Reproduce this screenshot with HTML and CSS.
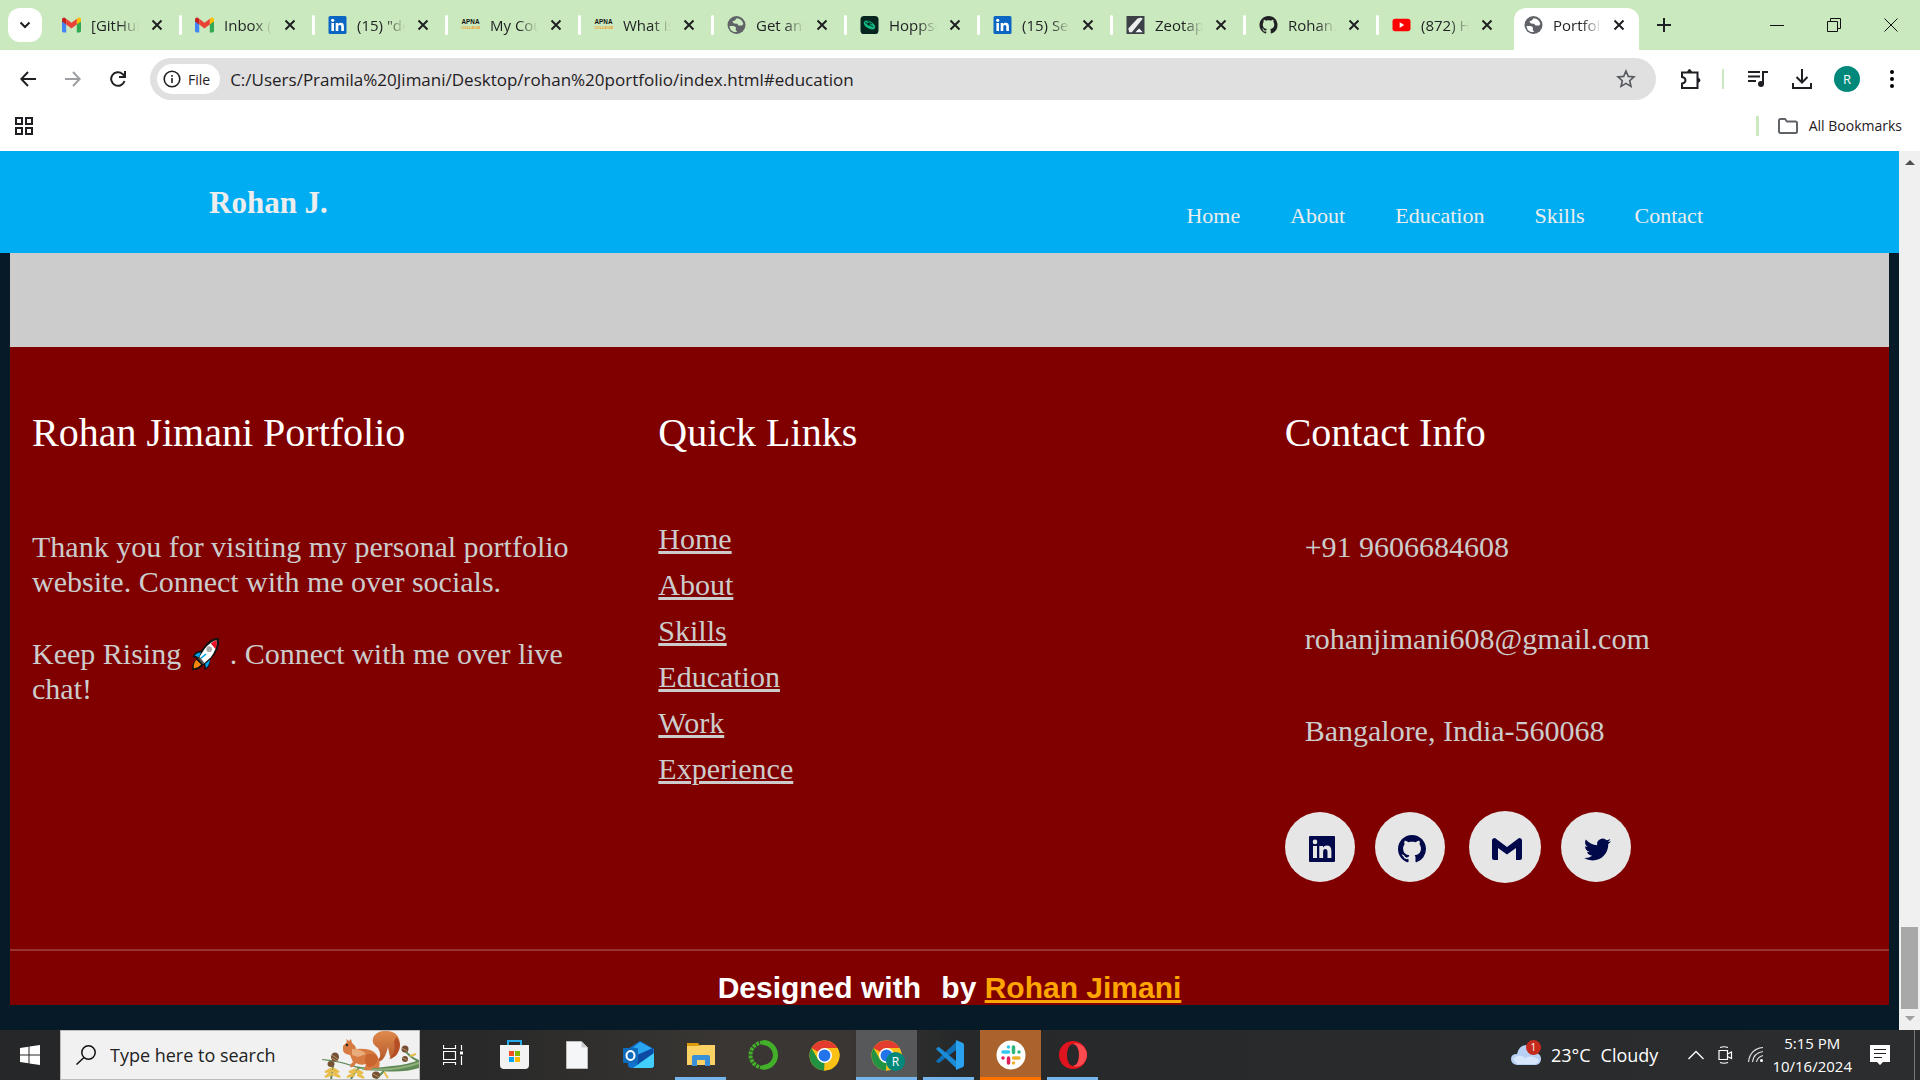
FILE: index.html
```html
<!DOCTYPE html>
<html lang="en">
<head>
<meta charset="utf-8">
<title>Portfolio</title>
<link rel="stylesheet" href="styles.css">
</head>
<body>
<svg class="defs" aria-hidden="true">
  <symbol id="close" viewBox="0 0 12 12"><path d="M1.500 1.500l9 9M10.500 1.500l-9 9" fill="none" stroke="#1f2023" stroke-width="2"/></symbol>
  <symbol id="gmail" viewBox="0 0 18 14"><path d="M0 2v10.500C0 13.400.6 14 1.400 14H4V5z" fill="#4285f4"/><path d="M18 2v10.500c0 .9-.6 1.500-1.400 1.500H14V5z" fill="#34a853"/><path d="M14 1.200V6.600l4-3V2c0-2-2.100-2.600-3.400-1.500z" fill="#fbbc04"/><path d="M4 1.200V6.600l-4-3V2C0 0 2.100-.6 3.400.5z" fill="#c5221f"/><path d="M4 1l5 3.800L14 1v5.600l-5 3.800-5-3.800z" fill="#ea4335"/></symbol>
  <symbol id="linkedin" viewBox="0 0 18 18"><rect width="18" height="18" rx="1.500" fill="#0a66c2"/><circle cx="4.200" cy="4.300" r="1.600" fill="#fff"/><path d="M2.900 7h2.600v8H2.900zM7.200 7h2.500v1.200c.5-.9 1.500-1.400 2.600-1.400 2.400 0 3.100 1.500 3.100 3.900V15h-2.600v-3.900c0-1.100-.2-2.100-1.400-2.100s-1.600.9-1.600 2.100V15H7.200z" fill="#fff"/></symbol>
  <symbol id="apna" viewBox="0 0 18 12"><text x="9" y="5" text-anchor="middle" class="apna-top">APNA</text><text x="9" y="10" text-anchor="middle" class="apna-bottom">COLLEGE</text></symbol>
  <symbol id="globe" viewBox="0 0 18 18"><circle cx="9" cy="9" r="9" fill="#5f6368"/><path d="M2 10h4.500l2 1.500-.3 2.500 1.500 2C5 16.500 2.300 14 2 10zM9 2.200L7.400 4.500l-2.600.8 1.600 2.200 3.200.2 1.400 1.800 3.600.1 1.200-1.600C15.500 5 12.500 2.300 9 2.200z" fill="var(--tab-fill)"/></symbol>
  <symbol id="github" viewBox="0 0 16 16"><path d="M8 0C3.580 0 0 3.580 0 8c0 3.540 2.290 6.530 5.470 7.590.4.070.55-.17.55-.38 0-.19-.01-.82-.01-1.490-2.010.37-2.530-.49-2.690-.94-.09-.23-.48-.94-.82-1.130-.28-.15-.68-.52-.01-.53.63-.01 1.080.58 1.230.82.72 1.210 1.870.87 2.330.66.070-.52.28-.87.51-1.070-1.780-.2-3.640-.89-3.640-3.950 0-.87.31-1.590.82-2.150-.08-.2-.36-1.020.08-2.120 0 0 .67-.21 2.200.82.64-.18 1.320-.27 2-.27s1.360.09 2 .27c1.530-1.040 2.200-.82 2.200-.82.44 1.100.16 1.920.08 2.120.51.56.82 1.270.82 2.150 0 3.070-1.870 3.750-3.650 3.950.29.25.54.73.54 1.480 0 1.070-.01 1.930-.01 2.200 0 .21.15.46.55.38A8.010 8.010 0 0016 8c0-4.420-3.580-8-8-8z" fill="currentColor"/></symbol>
  <symbol id="chrome" viewBox="0 0 32 32"><circle cx="16" cy="16" r="15.500" fill="#fbc116"/><path d="M16 16L2.600 8.300A15.500 15.500 0 0 1 29.400 8.300H16z" fill="#e33b2e"/><path d="M2.600 8.300L9.300 20 16 23.700 15.500 31.500A15.500 15.500 0 0 1 2.600 8.300z" fill="#229342"/><path d="M16 8.300h13.400A15.500 15.500 0 0 1 15.500 31.500L22.700 19.500z" fill="#fbc116"/><circle cx="16" cy="16" r="7.700" fill="#fff"/><circle cx="16" cy="16" r="6.100" fill="#2374ea"/></symbol>
</svg>

<header class="browser">
  <div class="tabstrip">
    <button class="tab-search" aria-label="Search tabs"><svg width="12" height="8" viewBox="0 0 12 8"><path d="M1.500 1.500L6 6l4.500-4.500" fill="none" stroke="#1f2023" stroke-width="2"/></svg></button>
    <div class="tabs">
      <div class="tab"><svg class="fav"><use href="#gmail"/></svg><span>[GitHub]</span><button aria-label="Close tab"><svg><use href="#close"/></svg></button></div>
      <div class="tab"><svg class="fav"><use href="#gmail"/></svg><span>Inbox (3)</span><button aria-label="Close tab"><svg><use href="#close"/></svg></button></div>
      <div class="tab"><svg class="fav"><use href="#linkedin"/></svg><span>(15) "dev</span><button aria-label="Close tab"><svg><use href="#close"/></svg></button></div>
      <div class="tab"><svg class="fav"><use href="#apna"/></svg><span>My Course</span><button aria-label="Close tab"><svg><use href="#close"/></svg></button></div>
      <div class="tab"><svg class="fav"><use href="#apna"/></svg><span>What is</span><button aria-label="Close tab"><svg><use href="#close"/></svg></button></div>
      <div class="tab"><svg class="fav"><use href="#globe"/></svg><span>Get any</span><button aria-label="Close tab"><svg><use href="#close"/></svg></button></div>
      <div class="tab"><svg class="fav" viewBox="0 0 20 20"><rect width="20" height="20" rx="4" fill="#06251f"/><ellipse cx="10" cy="10" rx="7" ry="4" transform="rotate(30 10 10)" fill="#10b981"/><path d="M5 7l9 5M7 5l6 4" stroke="#06251f" fill="none"/><circle cx="9" cy="9" r="1.500" fill="#06251f"/></svg><span>Hoppscotch</span><button aria-label="Close tab"><svg><use href="#close"/></svg></button></div>
      <div class="tab"><svg class="fav"><use href="#linkedin"/></svg><span>(15) Search</span><button aria-label="Close tab"><svg><use href="#close"/></svg></button></div>
      <div class="tab"><svg class="fav" viewBox="0 0 20 20"><rect width="20" height="20" fill="#3b4147"/><path d="M2 14L12 3q4-2 6 0L6 18H3z" fill="#eee"/><path d="M10 18l4-4 4 4z" fill="#fff"/></svg><span>Zeotap |</span><button aria-label="Close tab"><svg><use href="#close"/></svg></button></div>
      <div class="tab"><svg class="fav"><use href="#github"/></svg><span>Rohan.J</span><button aria-label="Close tab"><svg><use href="#close"/></svg></button></div>
      <div class="tab"><svg class="fav" viewBox="0 0 20 20"><rect y="3" width="20" height="14" rx="3" fill="#f00"/><path d="M8 7l5 3-5 3z" fill="#fff"/></svg><span>(872) How</span><button aria-label="Close tab"><svg><use href="#close"/></svg></button></div>
      <div class="tab active"><svg class="fav"><use href="#globe"/></svg><span>Portfolio</span><button aria-label="Close tab"><svg><use href="#close"/></svg></button></div>
    </div>
    <button class="new-tab" aria-label="New tab"><svg width="14" height="14"><path d="M7 0v14M0 7h14" stroke="#1f2023" stroke-width="2"/></svg></button>
    <div class="window-controls">
      <button aria-label="Minimize"><svg width="14" height="14"><path d="M0 7.500h14" stroke="#111"/></svg></button>
      <button aria-label="Restore"><svg width="14" height="14"><path d="M.5 3.500h10v10H.5zM3.500 3.500v-3h10v10h-3" fill="none" stroke="#111"/></svg></button>
      <button aria-label="Close"><svg width="14" height="14"><path d="M.5.500l13 13M13.500.500l-13 13" stroke="#111"/></svg></button>
    </div>
  </div>

  <div class="toolbar">
    <button class="tool" aria-label="Back"><svg width="16" height="16"><path d="M16 8H1.500M8 1L1.300 8 8 15" fill="none" stroke="#1f2023" stroke-width="2"/></svg></button>
    <button class="tool" aria-label="Forward"><svg width="16" height="16"><path d="M0 8h14.500M8 1l6.700 7L8 15" fill="none" stroke="#9c9ea1" stroke-width="2"/></svg></button>
    <button class="tool" aria-label="Reload"><svg width="16" height="16"><path d="M14.500 10A6.800 6.800 0 1 1 12.500 2.900L14.500 5M15 0v6H9" fill="none" stroke="#1f2023" stroke-width="2"/></svg></button>
    <div class="omnibox">
      <button class="file-chip"><svg width="18" height="18"><circle cx="9" cy="9" r="7.800" fill="none" stroke="#1f2023" stroke-width="1.600"/><path d="M9 8v5M9 5v1.700" stroke="#1f2023" stroke-width="1.600"/></svg>File</button>
      <input class="url" type="text" aria-label="Address" value="C:/Users/Pramila%20Jimani/Desktop/rohan%20portfolio/index.html#education">
      <button class="star" aria-label="Bookmark"><svg width="20" height="20" viewBox="0 0 20 20"><path d="M10 2l2.300 5.400 5.700.500-4.300 3.800 1.300 5.700-5-3-5 3 1.300-5.700L2 7.900l5.700-.5z" fill="none" stroke="#55585c" stroke-width="1.600"/></svg></button>
    </div>
    <div class="tools-right">
      <button class="tool" aria-label="Extensions"><svg width="22" height="22"><path d="M3 4.500h15.500V20H3v-4.500q3.500-.5 3.500-3.200T3 9z" fill="none" stroke="#1f2023" stroke-width="2"/><path d="M8 4q2.500-6 5 0zM19 9.500q5 2.700 0 5.500z" fill="#1f2023"/></svg></button>
      <i class="divider"></i>
      <button class="tool" aria-label="Media"><svg width="20" height="18"><path d="M0 2h12M0 6.500h12M0 11h8M15 14V2h5" fill="none" stroke="#1f2023" stroke-width="2"/><circle cx="13" cy="14" r="3" fill="#1f2023"/></svg></button>
      <button class="tool" aria-label="Downloads"><svg width="20" height="20"><path d="M10 0v13M4.500 8l5.500 5.500L15.500 8M1 14v5h18v-5" fill="none" stroke="#1f2023" stroke-width="2"/></svg></button>
      <button class="avatar" aria-label="Profile">R</button>
      <button class="tool" aria-label="Menu"><svg width="4" height="18"><circle cx="2" cy="2" r="2"/><circle cx="2" cy="9" r="2"/><circle cx="2" cy="16" r="2"/></svg></button>
    </div>
  </div>

  <div class="bookmarks">
    <button class="tool" aria-label="Apps"><svg width="18" height="18"><path d="M1 1h6v6H1zM11 1h6v6h-6zM1 11h6v6H1zM11 11h6v6h-6z" fill="none" stroke="#1f2023" stroke-width="2"/></svg></button>
    <button class="all-bookmarks"><svg width="20" height="16"><path d="M1 2.500Q1 1 2.500 1H7l2 2.500h8.500Q19 3.500 19 5v8.500Q19 15 17.500 15h-15Q1 15 1 13.500z" fill="none" stroke="#5f6368" stroke-width="2"/></svg>All Bookmarks</button>
  </div>
</header>

<div class="viewport">
  <div class="page">
    <nav class="site-nav">
      <h1>Rohan J.</h1>
      <ul>
        <li><a href="#home">Home</a></li>
        <li><a href="#about">About</a></li>
        <li><a href="#education">Education</a></li>
        <li><a href="#skills">Skills</a></li>
        <li><a href="#contact">Contact</a></li>
      </ul>
    </nav>
    <main class="body">
      <section class="blank"></section>
      <footer class="footer">
        <div class="columns">
          <section>
            <h2>Rohan Jimani Portfolio</h2>
            <div class="about">
              <p>Thank you for visiting my personal portfolio website. Connect with me over socials.</p>
              <p>Keep Rising <svg class="rocket" viewBox="0 0 36 42"><path d="M34 1Q24 1 16 11L12 17Q5 16 1 25l6 1-4 5Q0 36 1 41q7 0 11-4l4-3v7q8-4 7-13Q36 16 34 1z" fill="#111"/><path d="M31 4Q24 5 16 15L9 26l6 7 9-8Q32 14 31 4z" fill="#fff"/><path d="M31 4q-4 1-7 4l6 7q2-5 1-11z" fill="#e81224"/><path d="M12 19q-5 0-8 4l5 2zM23 28q-1 7-5 10l-1-5z" fill="#00a4ef"/><path d="M6 28q-4 5-3 11 6-1 9-5z" fill="#f7860a"/><path d="M8 26l6 8 2-2-6-8z" fill="#555"/><circle cx="22" cy="15" r="3.500" fill="#aaa"/><path d="M12 26l6-5" stroke="#00a4ef" stroke-width="2"/></svg>. Connect with me over live chat!</p>
            </div>
          </section>
          <section>
            <h2>Quick Links</h2>
            <ul class="links">
              <li><a href="#home">Home</a></li>
              <li><a href="#about">About</a></li>
              <li><a href="#skills">Skills</a></li>
              <li><a href="#education">Education</a></li>
              <li><a href="#work">Work</a></li>
              <li><a href="#experience">Experience</a></li>
            </ul>
          </section>
          <section>
            <h2>Contact Info</h2>
            <div class="contact">
              <p>+91 9606684608</p>
              <p>rohanjimani608@gmail.com</p>
              <p>Bangalore, India-560068</p>
            </div>
            <div class="social">
              <a href="#linkedin" aria-label="LinkedIn"><svg width="26" height="26" viewBox="0 0 26 26"><path fill-rule="evenodd" d="M1 0h24q1 0 1 1v24q0 1-1 1H1q-1 0-1-1V1q0-1 1-1zM4 10v12h4V10zM6 3.600a2.300 2.300 0 1 0 0 4.600 2.300 2.300 0 0 0 0-4.600zM10.300 10v12h3.800v-6q0-3 2.200-3t2.200 3v6h3.900v-7q0-5.400-4.800-5.400-2.300 0-3.500 2V10z" fill="currentColor"/></svg></a>
              <a href="#github" aria-label="GitHub"><svg width="28" height="28"><use href="#github"/></svg></a>
              <a class="large" href="#mail" aria-label="Gmail"><svg width="30" height="22" viewBox="0 0 30 22"><path d="M0 2.500Q0 0 3 0l12 9L27 0q3 0 3 2.500V20q0 2-2 2h-4V10l-9 6.500L6 10v12H2q-2 0-2-2z" fill="currentColor"/></svg></a>
              <a href="#twitter" aria-label="Twitter"><svg width="27" height="27" viewBox="0 0 24 24"><path d="M23.953 4.570a10 10 0 01-2.825.775 4.958 4.958 0 002.163-2.723c-.951.555-2.005.959-3.127 1.184a4.920 4.920 0 00-8.384 4.482C7.690 8.095 4.067 6.130 1.640 3.162a4.822 4.822 0 00-.666 2.475c0 1.710.870 3.213 2.188 4.096a4.904 4.904 0 01-2.228-.616v.06a4.923 4.923 0 003.946 4.827 4.996 4.996 0 01-2.212.085 4.936 4.936 0 004.604 3.417 9.867 9.867 0 01-6.102 2.105c-.39 0-.779-.023-1.170-.067a13.995 13.995 0 007.557 2.209c9.053 0 13.998-7.496 13.998-13.985 0-.21 0-.42-.015-.63A9.935 9.935 0 0024 4.590z" fill="currentColor"/></svg></a>
            </div>
          </section>
        </div>
        <p class="credit">Designed with <span>by <a href="#top">Rohan Jimani</a></span></p>
      </footer>
    </main>
  </div>
  <div class="scrollbar" aria-hidden="true"><i class="arrow up"></i><i class="thumb"></i><i class="arrow down"></i></div>
</div>

<div class="taskbar">
  <button class="start" aria-label="Start"><svg width="20" height="20"><path d="M0 3l8.500-1.200v7.700H0zM9.500 1.600L20 0v9.500H9.500zM0 10.500h8.500v7.700L0 17zM9.500 10.500H20V20L9.500 18.400z" fill="#fff"/></svg></button>
  <label class="search">
    <svg width="20" height="20"><circle cx="12.500" cy="7.500" r="6.700" fill="none" stroke="#111" stroke-width="1.500"/><path d="M8 12.500L.5 19.500" stroke="#111" stroke-width="1.500"/></svg>
    <input type="text" placeholder="Type here to search" aria-label="Search">
    <svg class="squirrel" width="97" height="48" viewBox="0 0 97 48">
      <defs><linearGradient id="fur" x1="0" x2="0" y1="0" y2="1"><stop offset="0" stop-color="#e08a4c"/><stop offset="1" stop-color="#b4572a"/></linearGradient></defs>
      <path d="M0 28q15 1 30 6t40 1q15-1 27-6v8q-15 5-38 3-20-1-30-5T0 29z" fill="#5f8a56"/><path d="M40 38q32 3 57-6" fill="none" stroke="#93b07c" stroke-width="2"/>
      <path d="M97 30Q88 27 81 17M11 34q0 6-2 14M37 37q-5 5-8 11M62 40l-8 8" fill="none" stroke="#5f8a56" stroke-width="2"/>
      <path d="M10 37l-7 4 7-1-7 6 8-3M11 37l6 4-6-1 7 6-8-3M34 38l-7 3 6 0-8 5 8-2M35 39l6 3-5 0 6 5-7-3M62 41l4 6M88 25l6-2" fill="none" stroke="#e9bd4c" stroke-width="2"/>
      <path d="M52 30Q62 28 56 17 48 12 52 5q5-6 14-5 11 1 12 13 0 10-9 15-2-5-3-12-4 18-14 14z" fill="url(#fur)"/>
      <path d="M72 11q3 9-5 17 10-2 11-14-1-6-4-8z" fill="#b64e25"/>
      <path d="M21 15l4-4-1-3 3 2 2-2 1 4q4 3 4 6 16-1 20 5 5 6 3 14h-7q1 3-8 2l2-6q-6 2-10-1-2 5-6 4 0-3 3-5l-3-7q-7-1-7-5z" fill="#d77b42"/>
      <path d="M44 24q9-4 12 4-2 8-10 8-5-6-2-12z" fill="#c9652f"/><path d="M30 18q10 0 14 5l-8 3-6-2z" fill="#e9ab7c"/><circle cx="25" cy="14" r="1.200" fill="#222"/>
      <g fill="#755034"><ellipse cx="13" cy="26" rx="4" ry="4.500"/><ellipse cx="9" cy="33" rx="3.500" ry="3"/><ellipse cx="54" cy="44" rx="4" ry="3.500"/><circle cx="83" cy="18" r="3.500"/><circle cx="83" cy="28" r="3"/></g>
      <path d="M10 24l6 4M10 27l5 3M51 43l6 3M80 17l5 3M81 27l4 2" stroke="#bb9166" stroke-width="1"/>
    </svg>
  </label>
  <div class="apps">
    <button class="app" aria-label="Task view"><svg width="20" height="20"><path d="M.5 0v3.500h12V0M.5 6.500h12v8H.5zM.5 20v-2.500h12V20M18.500 0v5M18.500 11v9" fill="none" stroke="#fff" stroke-width="1.200"/><path d="M17 6.500h3v3h-3z" fill="#fff"/></svg></button>
    <button class="app" aria-label="Store"><svg width="29" height="30"><path d="M8 5V1h13v4" fill="none" stroke="#27a9e8" stroke-width="2"/><path d="M0 5h29v20q0 4-4 4H4q-4 0-4-4z" fill="#f2f2f2"/><path d="M9 11h5v5H9z" fill="#f25022"/><path d="M15 11h5v5h-5z" fill="#7fba00"/><path d="M9 17h5v5H9z" fill="#00a4ef"/><path d="M15 17h5v5h-5z" fill="#ffb900"/></svg></button>
    <button class="app" aria-label="Document"><svg width="22" height="28"><path d="M.5.500h15l6 6v21H.5z" fill="#f5f6f7" stroke="#bbb"/><path d="M15.500.500v6h6z" fill="#c9cbcd"/></svg></button>
    <button class="app" aria-label="Outlook"><svg width="31" height="28"><path d="M5 8L17 0l14 8v16q0 3-3 3H9q-4 0-4-3z" fill="#1173ce"/><path d="M11 6l6-5 13 7-14 8z" fill="#2aa5ef"/><path d="M30 7v6L14 24V14z" fill="#0b4ba3"/><path d="M31 12v12q0 3-3 3H10z" fill="#42cdfb"/><rect y="7" width="15" height="15" rx="1" fill="#0f6cbd"/><ellipse cx="7.500" cy="14.500" rx="4" ry="4.500" fill="none" stroke="#fff" stroke-width="2"/></svg></button>
    <button class="app open" aria-label="File Explorer"><svg width="28" height="24"><path d="M0 4V0h11l3 4z" fill="#dd9a09"/><path d="M0 3h11l3-1h14v20H0z" fill="#fcd264"/><path d="M5 23V14q0-2 2-2h14q2 0 2 2v9h-5v-6h-8v6z" fill="#3990d8"/></svg></button>
    <button class="app" aria-label="Anaconda"><svg width="30" height="30"><path d="M15 2.500a12.500 12.500 0 0 1 0 25" fill="none" stroke="#43b02a" stroke-width="5"/><path d="M15 2.500a12.500 12.500 0 0 0 0 25" fill="none" stroke="#43b02a" stroke-width="4" stroke-dasharray="3 1"/></svg></button>
    <button class="app" aria-label="Chrome"><svg width="31" height="31"><use href="#chrome"/></svg></button>
    <button class="app current" aria-label="Chrome, profile R"><svg width="31" height="31"><use href="#chrome"/></svg><span class="profile">R</span></button>
    <button class="app open" aria-label="Visual Studio Code"><svg width="30" height="30"><path d="M2 21L22 2v8L5 23q-2 0-3-2z" fill="#0f70b7"/><path d="M2 9L22 28v-7L5 7Q3 7 2 9z" fill="#1b8bd6"/><path d="M22 0l7 3q1 1 1 2v20q0 1-1 2l-7 3z" fill="#2ba2ef"/></svg></button>
    <button class="app alert" aria-label="Slack"><svg width="30" height="30"><circle cx="15" cy="15" r="14.500" fill="#fff"/><g fill="none" stroke-width="3.500" stroke-linecap="round"><path d="M12.500 7v0M7 12h5.500" stroke="#36c5f0"/><path d="M17.500 7v5.500M23 12v0" stroke="#2eb67d"/><path d="M17.500 18H23M17.500 23v0" stroke="#ecb22e"/><path d="M12.500 18v5M7 18v0" stroke="#e01e5a"/></g></svg></button>
    <button class="app open" aria-label="Opera"><svg width="30" height="30"><path fill-rule="evenodd" d="M15 1a14 14 0 1 0 0 28 14 14 0 0 0 0-28zm0 3q6 1 6 11t-6 11Q9 25 9 15T15 4z" fill="#e0141e"/><path d="M15 4q5-2 10 2 8 9 0 18-5 4-10 2 6-1 6-11T15 4z" fill="#fb4a50"/></svg></button>
  </div>
  <div class="tray">
    <button class="weather"><span class="cloud"><svg width="30" height="20"><path d="M6 20q-6-1-6-6t6-5q2-9 10-9 7 0 9 8 5 1 5 6t-5 6z" fill="#b9d0f5"/><path d="M2 14q6-6 12-1 6-4 14 2-1 4-5 4H6z" fill="#d8e6fc"/></svg><b>1</b></span><span>23°C</span><span>Cloudy</span></button>
    <button aria-label="Show hidden icons"><svg width="16" height="10"><path d="M.5 9L8 1.500 15.500 9" fill="none" stroke="#fff" stroke-width="1.300"/></svg></button>
    <button aria-label="Meet now"><svg width="16" height="18"><path d="M1 4.500h8.500v9H1zM9.500 8l4-2v6.500l-4-2M2 1.500q4-1.500 8 0M2 16.500q4 1.500 8 0" fill="none" stroke="#fff" stroke-width="1.200"/></svg></button>
    <button aria-label="Network"><svg width="16" height="16"><path d="M.5 15Q2 2 15 .5M4.500 15Q5.500 6 15 4.500M8.500 15q1-5 6.500-6.500" fill="none" stroke="#ddd" stroke-width="1.200"/><circle cx="13.500" cy="13.500" r="1.500" fill="#fff"/></svg></button>
    <button class="clock"><span>5:15 PM</span><span>10/16/2024</span></button>
    <button aria-label="Notifications"><svg width="20" height="20"><path d="M0 0h20v17h-7l-3 3-3-3H0z" fill="#fff"/><path d="M4 4.500h12M4 8.500h12M4 12.500h8" stroke="#222"/></svg></button>
    <i class="peek"></i>
  </div>
</div>
</body>
</html>
```
FILE: styles.css
```css
* { box-sizing: border-box; margin: 0; padding: 0; }
body {
  display: flex;
  flex-direction: column;
  min-height: 100vh;
  background: #071a28;
  font-family: "Liberation Serif", serif;
}
.defs { display: none; }
ul { list-style: none; }
button { border: 0; background: none; font: inherit; color: inherit; flex: none; }
button svg { display: block; }
input { border: 0; background: none; font: inherit; color: inherit; outline: 0; min-width: 0; }

/* Browser chrome */
.browser { background: #fff; font-family: "Open Sans", sans-serif; color: #1f2023; }
.tabstrip { display: flex; align-items: stretch; height: 50px; padding-left: 8px; background: #cbe9be; }
.tab-search { display: grid; place-items: center; width: 34px; height: 34px; margin: 8px 7px 0 0; border-radius: 12px; background: #fff; }
.tabs { display: grid; grid-template-columns: repeat(12, 133px); font-size: 15px; }
.tab { --tab-fill: #cbe9be; display: flex; align-items: center; padding: 0 17px 0 13px; margin: 8px 0; border-right: 2px solid #cbe9be; position: relative; }
.tab::after { content: ""; position: absolute; right: -2px; top: 7px; width: 3px; height: 20px; border-radius: 2px; background: #fff; }
.tab:nth-child(11)::after, .tab.active::after { display: none; }
.tab .fav { flex: none; width: 19px; height: 18px; margin-right: 10px; }
.tab span { flex: 1; overflow: hidden; white-space: nowrap; -webkit-mask-image: linear-gradient(90deg, #000 60%, transparent); mask-image: linear-gradient(90deg, #000 60%, transparent); }
.tab button { margin-left: 12px; }
.tab button svg { width: 12px; height: 12px; }
.tab.active { --tab-fill: #fff; margin: 8px 6px 0 2px; padding: 0 14px 8px 10px; border: 0; border-radius: 12px 12px 0 0; background: #fff; }
.new-tab { padding: 0 12px; }
.window-controls { display: flex; gap: 43px; margin-left: auto; padding-right: 22px; }
.apna-top { font: bold 6px "Liberation Sans", sans-serif; fill: #111; }
.apna-bottom { font: bold 4px "Liberation Sans", sans-serif; fill: #f39a1f; }

.toolbar { display: flex; align-items: center; padding: 8px 26px 8px 20px; }
.toolbar > .tool { margin-right: 29px; }
.toolbar > .tool:nth-child(3) { margin-right: 24px; }
.omnibox { display: flex; flex: 1; align-items: center; height: 42px; padding: 0 20px 0 7px; border-radius: 21px; background: #e0e0e0; }
.file-chip { display: flex; align-items: center; gap: 7px; height: 30px; padding: 0 10px 0 6px; border-radius: 15px; background: #fff; font-size: 14px; }
.url { flex: 1; margin-left: 10px; font-size: 17px; }
.tools-right { display: flex; align-items: center; margin-left: 23px; }
.divider { width: 2px; height: 20px; margin: 0 24px 0 21px; background: #cbe9be; }
.tools-right .tool + .tool { margin-left: 24px; }
.avatar { width: 26px; height: 26px; margin: 0 30px 0 22px; border-radius: 50%; background: #00897b; color: #fff; font-size: 13px; }
.bookmarks { display: flex; align-items: center; justify-content: space-between; height: 43px; padding: 0 18px 8px 15px; }
.all-bookmarks { display: flex; align-items: center; gap: 11px; height: 20px; padding-left: 19px; border-left: 3px solid #cbe9be; font-size: 14px; }

/* Portfolio page */
.viewport { display: grid; grid-template-columns: 1fr 21px; flex: 1; }
.page { padding-bottom: 25px; }
.site-nav { display: flex; justify-content: space-between; padding: 34px 196px 33px 209px; background: #00adf2; color: #ededed; }
.site-nav h1 { font-size: 31px; line-height: 35px; }
.site-nav ul { display: flex; gap: 50px; padding-top: 18px; font-size: 22px; line-height: 26px; height: 35px; }
.site-nav a { color: inherit; text-decoration: none; }
.body { padding: 0 10px; }
.blank { height: 94px; background: #ccc; }
.footer { background: maroon; color: #ccc; font-size: 30px; line-height: 35px; }
.columns { display: grid; grid-template-columns: repeat(3, 1fr); padding: 63px 0 66px; border-bottom: 2px solid #993333; }
.columns section { padding: 0 22px; }
.columns h2 { font-size: 40px; font-weight: normal; line-height: 46px; color: #fff; }
.about { display: grid; gap: 37px; margin-top: 73px; }
.rocket { width: 34px; height: 34px; margin-right: 7px; vertical-align: -7px; }
.links { margin-top: 60px; line-height: 46px; }
.links a { color: inherit; }
.contact { display: grid; gap: 57px; margin: 73px 0 63px; padding-left: 20px; }
.social { display: flex; align-items: center; gap: 20px; }
.social a { display: grid; place-items: center; width: 70px; height: 70px; padding: 4px 0 0 4px; border-radius: 50%; background: #e6e6e6; color: #02094a; }
.social .large { width: 72px; height: 72px; margin-left: 4px; }
.credit { padding-top: 19px; text-align: center; color: #fff; font-family: "Liberation Sans", sans-serif; font-weight: bold; }
.credit span { margin-left: 12px; }
.credit a { color: orange; }

.scrollbar { display: flex; flex-direction: column; align-items: center; padding: 9px 0; background: #f0f0f0; }
.arrow { border: 5px solid transparent; }
.up { border-top: 0; border-bottom-color: #505050; margin-bottom: auto; }
.thumb { width: 17px; height: 82px; background: #a8a8a8; }
.down { border-bottom: 0; border-top-color: #a0a0a0; margin-top: 7px; }

/* Taskbar */
.taskbar { display: flex; height: 50px; background: linear-gradient(90deg, #262728, #292929 25%, #393633 38%, #393633 44%, #262829 50%, #2c2d2e); color: #fff; font-family: "Open Sans", sans-serif; }
.start { display: grid; place-items: center; width: 60px; }
.search { display: flex; align-items: center; width: 360px; padding-left: 15px; border: 1px solid #bbb; background: #f1f1f1; color: #222; font-size: 18px; overflow: hidden; }
.search input { flex: 1; padding-left: 14px; }
.search input::placeholder { color: #222; opacity: 1; }
.squirrel { flex: none; }
.apps { display: flex; gap: 1px; padding-left: 2px; }
.app { display: grid; place-items: center; width: 61px; position: relative; }
.app::after { content: ""; position: absolute; bottom: 0; left: 5px; right: 5px; height: 3px; }
.open::after { background: #76b5ec; }
.current { background: #575859; }
.current::after { left: 0; right: 0; background: #76b5ec; }
.alert { background: #aa632c; }
.alert::after { left: 0; right: 0; background: #ff7200; }
.profile { position: absolute; right: 12px; bottom: 9px; width: 19px; height: 19px; border-radius: 50%; background: #00897b; font-size: 12px; line-height: 19px; }
.tray { display: flex; align-items: center; margin-left: auto; }
.weather { display: flex; align-items: center; gap: 10px; margin-right: 30px; font-size: 18px; }
.cloud { position: relative; }
.cloud b { position: absolute; right: 0; top: -5px; width: 15px; height: 15px; border-radius: 50%; background: #c42b1c; font-size: 10px; font-weight: normal; line-height: 15px; }
.tray button + button { margin-right: 14px; }
.tray .clock { display: grid; margin: 0 18px 0 -6px; font-size: 15px; line-height: 23px; text-align: center; }
.tray button.clock { margin-right: 18px; }
.peek { align-self: stretch; width: 1px; margin: 0 5px 0 10px; background: #777; }
```
